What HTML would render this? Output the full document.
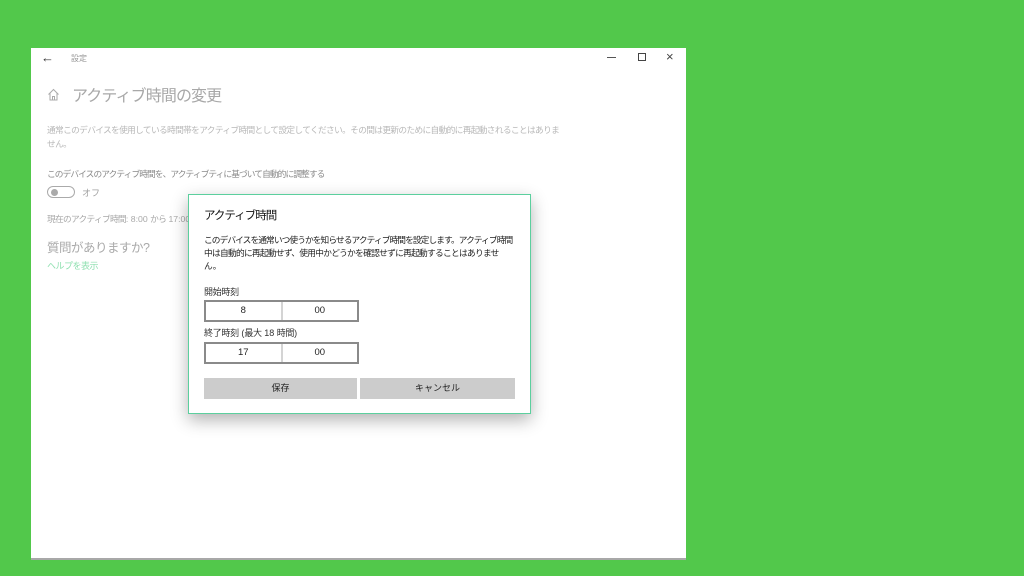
<!DOCTYPE html>
<html><head><meta charset="utf-8"><style>
*{margin:0;padding:0;box-sizing:border-box}
body{width:1024px;height:576px;background:#52c84b;position:relative;overflow:hidden;font-family:"Liberation Sans","Noto Sans CJK JP",sans-serif}
.win{position:absolute;left:31px;top:48px;width:655px;height:512px;background:#fff;border-bottom:2px solid #a8a8a8}
.t{position:absolute;white-space:nowrap}
.g{color:#b8b8b8}
.l{letter-spacing:0}
.dlg{position:absolute;left:188px;top:194px;width:343px;height:220px;background:#fff;border:1px solid #5ccf9e;box-shadow:0 6px 16px rgba(0,0,0,.3)}
.box{position:absolute;left:15px;width:155px;height:22px;border:2px solid #8a8a8a;display:flex}
.box div{flex:1;text-align:center;font-size:9.5px;line-height:18px;color:#222}
.box div+div{border-left:2px solid #d4d4d4}
.btn{position:absolute;top:183px;height:21px;background:#cccccc;text-align:center;font-size:9px;line-height:21px;color:#222}
</style></head><body>
<div class="win">
 <div class="t" style="left:10px;top:2px;font-size:13px;color:#333">&#8592;</div>
 <div class="t g" style="left:40px;top:5px;font-size:8px;color:#999">設定</div>
 <div class="t" style="left:576px;top:9px;width:9px;height:1px;background:#555"></div>
 <div class="t" style="left:607px;top:5px;width:8px;height:8px;border:1px solid #444"></div>
 <div class="t" style="left:635px;top:1px;font-size:13px;color:#444">&#215;</div>
 <svg class="t" style="left:16px;top:40px" width="13" height="13" viewBox="0 0 13 13"><path d="M1.5 6.5 L6.5 1.5 L11.5 6.5 M3 5 V12 H10 V5 M5.5 12 V8.5 H7.5 V12" fill="none" stroke="#aaa" stroke-width="1"/></svg>
 <div class="t g" style="left:41px;top:34px;font-size:16px;letter-spacing:-0.9px;color:#a8a8a8">アクティブ時間の変更</div>
 <div class="t g" style="left:16px;top:75px;font-size:8.7px;letter-spacing:-0.65px">通常このデバイスを使用している時間帯をアクティブ時間として設定してください。その間は更新のために自動的に再起動されることはありま</div>
 <div class="t g" style="left:16px;top:89px;font-size:8.7px;letter-spacing:-0.6px">せん。</div>
 <div class="t" style="left:16px;top:119px;font-size:8.7px;letter-spacing:-0.9px;color:#8a8a8a">このデバイスのアクティブ時間を、アクティブティに基づいて自動的に調整する</div>
 <div class="t" style="left:16px;top:138px;width:28px;height:12px;border:1px solid #aaa;border-radius:7px"></div>
 <div class="t" style="left:20px;top:141px;width:7px;height:7px;border-radius:50%;background:#aaa"></div>
 <div class="t g" style="left:51px;top:138px;font-size:9px;color:#a0a0a0">オフ</div>
 <div class="t g" style="left:16px;top:164px;font-size:8.7px;letter-spacing:-0.7px;color:#a8a8a8">現在のアクティブ時間<span class="l">: 8:00 </span>から<span class="l"> 17:00</span></div>
 <div class="t g" style="left:16px;top:189px;font-size:12.5px;letter-spacing:-0.5px;color:#aaa">質問がありますか<span class="l">?</span></div>
 <div class="t" style="left:16px;top:211px;font-size:9px;letter-spacing:-0.5px;color:#8fe0b0">ヘルプを表示</div>
</div>
<div class="dlg">
 <div class="t" style="left:15px;top:12px;font-size:11.5px;letter-spacing:-1px;color:#111">アクティブ時間</div>
 <div class="t" style="left:15px;top:38px;font-size:8.7px;letter-spacing:-0.9px;color:#222">このデバイスを通常いつ使うかを知らせるアクティブ時間を設定します。アクティブ時間</div>
 <div class="t" style="left:15px;top:51px;font-size:8.7px;letter-spacing:-0.7px;color:#222">中は自動的に再起動せず、使用中かどうかを確認せずに再起動することはありませ</div>
 <div class="t" style="left:15px;top:64px;font-size:8.7px;color:#222">ん。</div>
 <div class="t" style="left:15px;top:90px;font-size:9px;letter-spacing:-0.3px;color:#333">開始時刻</div>
 <div class="box" style="top:105px"><div>8</div><div>00</div></div>
 <div class="t" style="left:15px;top:131px;font-size:9px;letter-spacing:-0.3px;color:#333">終了時刻<span class="l"> (</span>最大<span class="l"> 18 </span>時間<span class="l">)</span></div>
 <div class="box" style="top:147px"><div>17</div><div>00</div></div>
 <div class="btn" style="left:15px;width:153px">保存</div>
 <div class="btn" style="left:171px;width:155px">キャンセル</div>
</div>
</body></html>
